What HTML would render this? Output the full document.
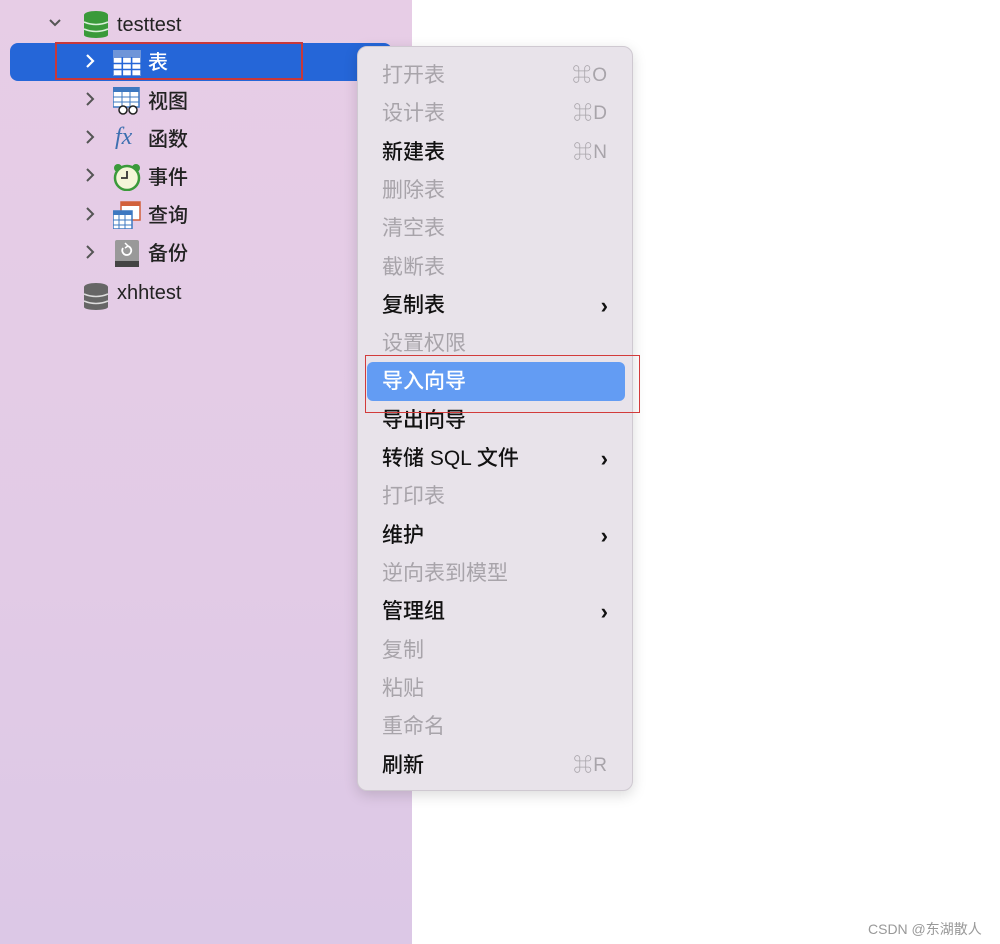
<!DOCTYPE html>
<html><head><meta charset="utf-8"><style>
*{margin:0;padding:0;box-sizing:border-box}
body{width:1000px;height:944px;position:relative;background:#fff;overflow:hidden;font-family:"Liberation Sans","Noto Sans CJK SC",sans-serif}
#side{position:absolute;left:0;top:0;width:412px;height:944px;background:linear-gradient(180deg,#e7cde6 0%,#e2cbe6 60%,#dcc8e6 100%)}
.t{position:absolute;font-size:20px;color:#222;line-height:24px;font-weight:500}
#sel{position:absolute;left:10px;top:43px;width:382px;height:38px;background:#2566d8;border-radius:8px}
#menu{position:absolute;left:357px;top:46px;width:276px;height:745px;background:#e8e3ea;border:1px solid #cfc9d1;border-radius:10px;box-shadow:0 4px 14px rgba(0,0,0,.15)}
.m{position:absolute;left:24px;font-size:21px;line-height:26px;color:#111;font-weight:500}
.d{color:#a8a4aa;font-weight:400}
.k{position:absolute;right:24px;font-size:19px;color:#a8a4aa;line-height:26px;letter-spacing:1px}
.ar{position:absolute;right:24px;font-size:22px;color:#111;font-weight:bold;line-height:26px}
</style></head><body>
<div id="side"></div>
<div id="sel"></div>
<div style="position:absolute;left:55px;top:42px;width:248px;height:38px;border:2px solid #c8383a"></div>
<svg style="position:absolute;left:48px;top:16px" width="14" height="14"><path d="M2 4l5 5 5-5" stroke="#555" stroke-width="2" fill="none"/></svg>
<svg style="position:absolute;left:83px;top:10px" width="26" height="28"><ellipse cx="13" cy="5" rx="12" ry="4" fill="#3a9a3a"/><rect x="1" y="5" width="24" height="20" fill="#3a9a3a"/><ellipse cx="13" cy="25" rx="12" ry="3" fill="#3a9a3a"/><path d="M1 12q12 5 24 0M1 19q12 5 24 0" stroke="#d8f0d8" stroke-width="1.5" fill="none"/></svg>
<div class="t" style="left:117px;top:13px">testtest</div>
<svg style="position:absolute;left:83px;top:282px" width="26" height="28"><ellipse cx="13" cy="5" rx="12" ry="4" fill="#666"/><rect x="1" y="5" width="24" height="20" fill="#666"/><ellipse cx="13" cy="25" rx="12" ry="3" fill="#666"/><path d="M1 12q12 5 24 0M1 19q12 5 24 0" stroke="#ddd" stroke-width="1.5" fill="none"/></svg>
<div class="t" style="left:117px;top:281px">xhhtest</div>
<svg style="position:absolute;left:84px;top:53px" width="12" height="16"><path d="M3 2l6 6-6 6" stroke="#fff" stroke-width="2.2" fill="none"/></svg>
<svg style="position:absolute;left:84px;top:91px" width="12" height="16"><path d="M3 2l6 6-6 6" stroke="#555" stroke-width="2" fill="none"/></svg>
<svg style="position:absolute;left:84px;top:129px" width="12" height="16"><path d="M3 2l6 6-6 6" stroke="#555" stroke-width="2" fill="none"/></svg>
<svg style="position:absolute;left:84px;top:167px" width="12" height="16"><path d="M3 2l6 6-6 6" stroke="#555" stroke-width="2" fill="none"/></svg>
<svg style="position:absolute;left:84px;top:206px" width="12" height="16"><path d="M3 2l6 6-6 6" stroke="#555" stroke-width="2" fill="none"/></svg>
<svg style="position:absolute;left:84px;top:244px" width="12" height="16"><path d="M3 2l6 6-6 6" stroke="#555" stroke-width="2" fill="none"/></svg>
<svg style="position:absolute;left:113px;top:50px" width="28" height="26"><rect x="0" y="0" width="28" height="26" fill="#6f95d8"/><rect x="1" y="8" width="26" height="17" fill="#fff"/><path d="M0 13.5h28M0 19.5h28M9.3 7v19M18.6 7v19" stroke="#2566d8" stroke-width="1.6"/></svg>
<div class="t" style="left:148px;top:51px;color:#fff">表</div>
<svg style="position:absolute;left:113px;top:87px" width="28" height="28"><rect x="0" y="0" width="26" height="20" fill="#fff" stroke="#3d78c0" stroke-width="1.5"/><rect x="0" y="0" width="26" height="5" fill="#3d78c0"/><path d="M0 10h26M0 15h26M9 5v15M17 5v15" stroke="#3d78c0"/><circle cx="10" cy="23" r="4" fill="#fff" stroke="#222" stroke-width="1.5"/><circle cx="20" cy="23" r="4" fill="#fff" stroke="#222" stroke-width="1.5"/></svg>
<div class="t" style="left:148px;top:90px">视图</div>
<div style="position:absolute;left:115px;top:124px;font-family:'Liberation Serif',serif;font-style:italic;font-size:24px;color:#3d6fb0">fx</div>
<div class="t" style="left:148px;top:128px">函数</div>
<svg style="position:absolute;left:113px;top:163px" width="28" height="28"><circle cx="5" cy="5" r="4" fill="#3a9a3a"/><circle cx="23" cy="5" r="4" fill="#3a9a3a"/><circle cx="14" cy="15" r="12" fill="#f4f6d8" stroke="#3a9a3a" stroke-width="2.5"/><path d="M14 8v7h-6" stroke="#333" stroke-width="1.8" fill="none"/></svg>
<div class="t" style="left:148px;top:166px">事件</div>
<svg style="position:absolute;left:113px;top:201px" width="28" height="28"><rect x="8" y="1" width="19" height="18" fill="#fff" stroke="#d2603a" stroke-width="1.5"/><rect x="8" y="1" width="19" height="4" fill="#d2603a"/><rect x="0" y="10" width="19" height="18" fill="#fff" stroke="#3d78c0" stroke-width="1.5"/><rect x="0" y="10" width="19" height="4" fill="#3d78c0"/><path d="M0 19h19M0 24h19M6 14v14M12 14v14" stroke="#3d78c0"/></svg>
<div class="t" style="left:148px;top:204px">查询</div>
<svg style="position:absolute;left:115px;top:240px" width="24" height="28"><rect x="0" y="0" width="24" height="27" rx="2" fill="#999"/><rect x="0" y="21" width="24" height="6" fill="#444"/><path d="M8 8a4.5 4.5 0 1 0 4-2" stroke="#fff" stroke-width="1.8" fill="none"/><path d="M10 3l3 3-3 2" stroke="#fff" stroke-width="1.5" fill="none"/></svg>
<div class="t" style="left:148px;top:242px">备份</div>

<div id="menu">
<div style="position:absolute;left:9px;top:315px;width:258px;height:39px;background:#639cf3;border-radius:6px"></div>
<div class="m d" style="top:16px">打开表</div><div class="k" style="top:16px">⌘O</div>
<div class="m d" style="top:54px">设计表</div><div class="k" style="top:54px">⌘D</div>
<div class="m" style="top:93px">新建表</div><div class="k" style="top:93px">⌘N</div>
<div class="m d" style="top:131px">删除表</div>
<div class="m d" style="top:169px">清空表</div>
<div class="m d" style="top:208px">截断表</div>
<div class="m" style="top:246px">复制表</div><div class="ar" style="top:246px">›</div>
<div class="m d" style="top:284px">设置权限</div>
<div class="m" style="top:322px;color:#fff">导入向导</div>
<div class="m" style="top:361px">导出向导</div>
<div class="m" style="top:399px">转储 SQL 文件</div><div class="ar" style="top:399px">›</div>
<div class="m d" style="top:437px">打印表</div>
<div class="m" style="top:476px">维护</div><div class="ar" style="top:476px">›</div>
<div class="m d" style="top:514px">逆向表到模型</div>
<div class="m" style="top:552px">管理组</div><div class="ar" style="top:552px">›</div>
<div class="m d" style="top:591px">复制</div>
<div class="m d" style="top:629px">粘贴</div>
<div class="m d" style="top:667px">重命名</div>
<div class="m" style="top:706px">刷新</div><div class="k" style="top:706px">⌘R</div>
</div>
<div style="position:absolute;left:365px;top:355px;width:275px;height:58px;border:1.5px solid #d23b3b"></div>
<div style="position:absolute;left:868px;top:919px;font-size:14px;color:#999">CSDN @东湖散人</div>
</body></html>
